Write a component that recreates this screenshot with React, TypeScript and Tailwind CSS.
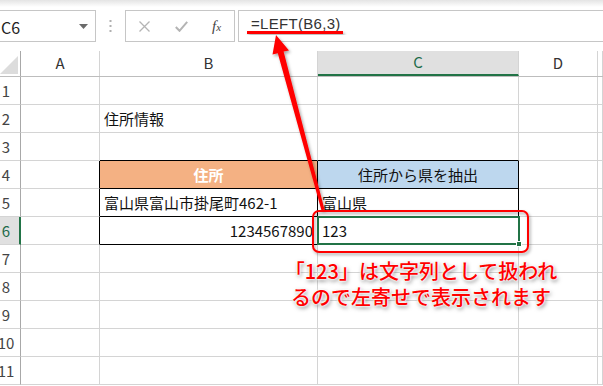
const cjk = "font-['Noto_Sans_CJK_JP','Noto_Sans',sans-serif]";

type Cell = {
  text?: string;
  align?: "left" | "right" | "center";
  bold?: boolean;
  white?: boolean;
};

const cols = ["A", "B", "C", "D", ""];
const colW = ["w-[79px]", "w-[218px]", "w-[201px]", "w-[79px]", "flex-1"];

const data: Record<number, Record<number, Cell>> = {
  2: { 1: { text: "住所情報" } },
  4: {
    1: { text: "住所", align: "center", bold: true, white: true },
    2: { text: "住所から県を抽出", align: "center" },
  },
  5: { 1: { text: "富山県富山市掛尾町462-1" }, 2: { text: "富山県" } },
  6: { 1: { text: "1234567890", align: "right" }, 2: { text: "123" } },
};

// black table border B4:C6
const inTable = (r: number, c: number) => r >= 4 && r <= 6 && (c === 1 || c === 2);

const FormulaBar = () => (
  <div className={`h-[51px] bg-white relative ${cjk}`}>
    <div className="h-[7px] bg-gradient-to-b from-[#e4e4e4] to-white" />
    <div className="flex items-start mt-[3px]">
      <div className="w-[96px] h-[32px] border border-l-0 border-[#c6c6c6] flex items-center justify-between pl-[1px] pr-[7px] pt-[2px]">
        <span className="text-[16px] text-[#222] leading-none">C6</span>
        <svg width="9" height="5" viewBox="0 0 9 5" className="-mt-[2px]">
          <path d="M0 0h9L4.5 5z" fill="#6a6a6a" />
        </svg>
      </div>
      <div className="w-[29px] h-[32px] flex items-center justify-center">
        <svg width="3" height="12" viewBox="0 0 3 12">
          <rect x="0.5" y="0" width="2" height="2" fill="#b0b0b0" />
          <rect x="0.5" y="5" width="2" height="2" fill="#b0b0b0" />
          <rect x="0.5" y="10" width="2" height="2" fill="#b0b0b0" />
        </svg>
      </div>
      <div className="w-[110px] h-[32px] border border-[#c6c6c6] flex items-center">
        <div className="w-[37px] flex justify-center">
          <svg width="11" height="11" viewBox="0 0 11 11">
            <path d="M0.5 0.5l10 10M10.5 0.5l-10 10" stroke="#b4b4b4" strokeWidth="1.3" />
          </svg>
        </div>
        <div className="w-[36px] flex justify-center">
          <svg width="13" height="11" viewBox="0 0 13 11">
            <path d="M0.8 6l3.7 3.8L12.2 0.8" stroke="#b4b4b4" strokeWidth="2" fill="none" />
          </svg>
        </div>
        <div className="w-[35px] flex justify-center">
          <span className="font-['Liberation_Serif',serif] italic text-[15px] text-[#444] leading-none">
            f<span className="text-[11px]">x</span>
          </span>
        </div>
      </div>
      <div className="ml-[3px] flex-1 h-[32px] border border-r-0 border-[#c6c6c6] pl-[12px] pt-[5px]">
        <span className="block text-[15px] text-[#333] leading-none tracking-[0.3px] font-['Liberation_Sans',sans-serif]">=LEFT(B6,3)</span>
      </div>
    </div>
  </div>
);

const HeaderRow = () => (
  <div className={`flex h-[26px] border-b border-[#bdbdbd] ${cjk}`}>
    <div className="w-[21px] border-r border-[#a8a8a8] relative">
      <svg className="absolute left-0 bottom-[2px]" width="18" height="18" viewBox="0 0 18 18">
        <path d="M18 0V18H0z" fill="#dcdcdc" />
      </svg>
    </div>
    {cols.map((c, i) => (
      <div
        key={i}
        className={`${colW[i]} border-r border-[#d4d4d4] flex items-center justify-center text-[15px] ${
          c === "C" ? "bg-[#e0e0e0] text-[#1e6b4a] border-b-2 border-b-[#217346]" : "text-[#333]"
        }`}
      >
        {c}
      </div>
    ))}
  </div>
);

const Row = ({ r }: { r: number }) => {
  const sel = r === 6;
  return (
    <div className={`flex h-[28px] ${cjk}`}>
      <div
        className={`w-[21px] flex items-center border-b border-[#d4d4d4] ${
          sel ? "bg-[#e0e0e0] border-r-2 border-r-[#217346] text-[#1e6b4a]" : "border-r border-r-[#a8a8a8] text-[#444]"
        }`}
      >
        <span className="w-[12px] flex justify-center text-[15px] leading-none">{r}</span>
      </div>
      {cols.map((_, c) => {
        const cell = data[r]?.[c];
        const blackR = inTable(r, c) || inTable(r, c + 1);
        const blackB = inTable(r, c) || inTable(r + 1, c);
        const bg =
          r === 4 && c === 1 ? "bg-[#f4b183]" : r === 4 && c === 2 ? "bg-[#bdd7ee]" : "bg-white";
        const just =
          cell?.align === "center" ? "justify-center" : cell?.align === "right" ? "justify-end pr-[4px]" : "justify-start pl-[4px]";
        return (
          <div
            key={c}
            className={`${colW[c]} ${bg} relative border-r border-b flex items-center pt-[2px] ${just} ${
              blackR ? "border-r-black" : "border-r-[#d4d4d4]"
            } ${blackB ? "border-b-black" : "border-b-[#d4d4d4]"}`}
          >
            {cell?.text && (
              <span
                className={`text-[15px] whitespace-nowrap ${cell.white ? "text-white" : "text-[#111]"} ${
                  cell.bold ? "font-bold" : ""
                }`}
              >
                {cell.text}
              </span>
            )}
            {sel && c === 2 && (
              <div className="absolute z-10 -top-[1px] -left-[1px] -right-[2px] -bottom-[1px] border-2 border-[#217346]">
                <div className="absolute -right-[4px] -bottom-[4px] w-[6px] h-[6px] bg-[#217346] border border-white" />
              </div>
            )}
          </div>
        );
      })}
    </div>
  );
};

const Annotations = () => (
  <>
    <svg className="absolute inset-0 z-20 pointer-events-none" width="603" height="386" viewBox="0 0 603 386">
      <defs>
        <filter id="sh" x="-20%" y="-20%" width="140%" height="140%">
          <feDropShadow dx="1.5" dy="2" stdDeviation="1.5" floodColor="#000" floodOpacity="0.35" />
        </filter>
      </defs>
      <rect x="247" y="31" width="96" height="3" fill="#ff0000" filter="url(#sh)" />
      <polygon
        points="276,35 289,50.5 283.6,51.6 324.5,209.6 321.5,210.4 277.8,53.2 272.5,54.5"
        fill="#ff0000"
        filter="url(#sh)"
      />
      <rect x="313" y="211" width="215" height="41" rx="6" fill="none" stroke="#ff0000" strokeWidth="2" filter="url(#sh)" />
    </svg>
    <div
      className={`absolute z-20 left-[271px] top-[258px] w-[300px] text-center text-[20px] leading-[26px] font-medium text-[#ff0000] ${cjk} [text-shadow:0_0_2px_#fff,0_0_2px_#fff,0_0_3px_#fff,1px_2px_4px_rgba(0,0,0,0.55)]`}
    >
      「123」は文字列として扱われ
      <br />
      るので左寄せで表示されます
    </div>
  </>
);

export default function App() {
  const rows = [1, 2, 3, 4, 5, 6, 7, 8, 9, 10, 11];
  return (
    <div className="relative w-[603px] h-[386px] overflow-hidden bg-white">
      <FormulaBar />
      <HeaderRow />
      {rows.map((r) => (
        <Row key={r} r={r} />
      ))}
      <Annotations />
    </div>
  );
}
